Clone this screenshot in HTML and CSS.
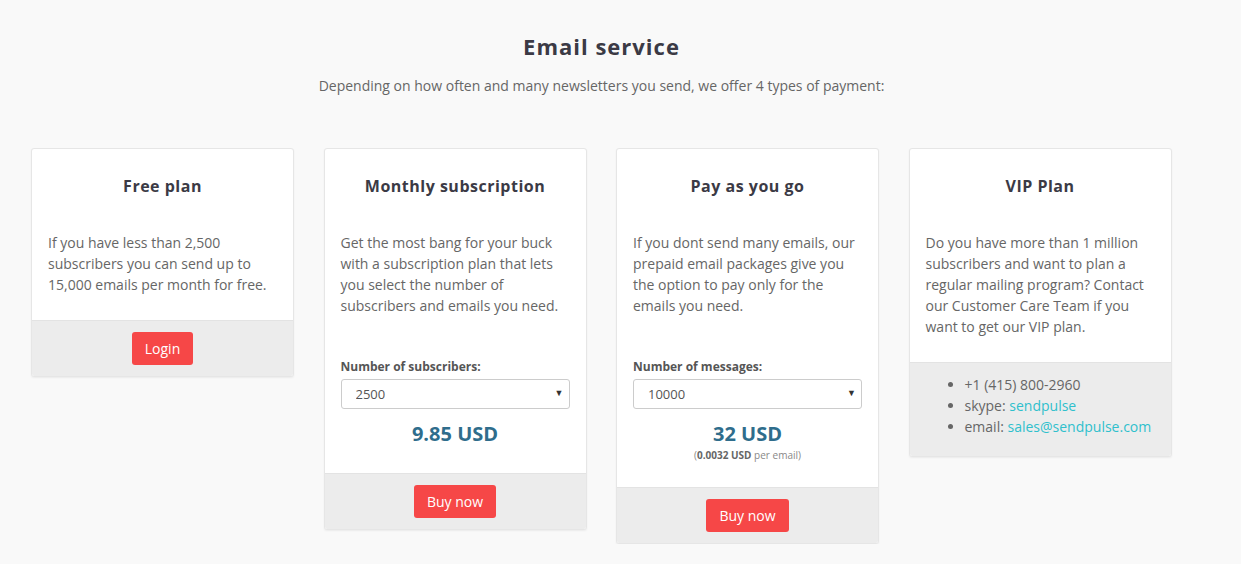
FILE: index.html
```html
<!DOCTYPE html>
<html lang="en">
<head>
<meta charset="utf-8">
<title>Email service</title>
<link rel="stylesheet" href="styles.css">
</head>
<body>
<section class="pricing">
  <header class="intro">
    <h1 class="intro-title">Email service</h1>
    <p class="intro-sub">Depending on how often and many newsletters you send, we offer 4 types of payment:</p>
  </header>
  <div class="plans">
    <article class="plan">
      <div class="plan-body">
        <h2 class="plan-title">Free plan</h2>
        <p class="plan-text">If you have less than 2,500 subscribers you can send up to 15,000 emails per month for free.</p>
      </div>
      <div class="plan-foot">
        <a class="btn" href="#">Login</a>
      </div>
    </article>
    <article class="plan">
      <div class="plan-body">
        <h2 class="plan-title">Monthly subscription</h2>
        <p class="plan-text">Get the most bang for your buck with a subscription plan that lets you select the number of subscribers and emails you need.</p>
        <label class="field-label">Number of subscribers:</label>
        <div class="select-wrap">
          <select class="select"><option>2500</option></select>
        </div>
        <div class="price">9.85 USD</div>
      </div>
      <div class="plan-foot">
        <a class="btn" href="#">Buy now</a>
      </div>
    </article>
    <article class="plan">
      <div class="plan-body">
        <h2 class="plan-title">Pay as you go</h2>
        <p class="plan-text">If you dont send many emails, our prepaid email packages give you the option to pay only for the emails you need.</p>
        <label class="field-label">Number of messages:</label>
        <div class="select-wrap">
          <select class="select"><option>10000</option></select>
        </div>
        <div class="price">32 USD</div>
        <div class="price-note">(<b>0.0032 USD</b> per email)</div>
      </div>
      <div class="plan-foot">
        <a class="btn" href="#">Buy now</a>
      </div>
    </article>
    <article class="plan">
      <div class="plan-body">
        <h2 class="plan-title">VIP Plan</h2>
        <p class="plan-text">Do you have more than 1 million subscribers and want to plan a regular mailing program? Contact our Customer Care Team if you want to get our VIP plan.</p>
      </div>
      <div class="plan-foot plan-foot-list">
        <ul class="contacts">
          <li>+1 (415) 800-2960</li>
          <li>skype: <a class="link" href="#">sendpulse</a></li>
          <li>email: <a class="link" href="#">sales@sendpulse.com</a></li>
        </ul>
      </div>
    </article>
  </div>
</section>
</body>
</html>
```

FILE: styles.css
```css
* { box-sizing: border-box; }
html, body { margin: 0; padding: 0; }
body {
  background: #f9f9f9;
  font-family: "Open Sans", "Liberation Sans", sans-serif;
  color: #666;
  font-size: 14px;
}
.pricing { padding: 30px 0 0 31px; width: 1202px; }
.intro { text-align: center; width: 1141px; }
.intro-title {
  margin: 0;
  font-size: 22px;
  line-height: 32px;
  font-weight: 700;
  color: #3b3a45;
  letter-spacing: 1px;
}
.intro-sub {
  margin: 14px 0 0;
  font-size: 14px;
  line-height: 20px;
  color: #666;
}
.plans {
  margin-top: 52px;
  display: grid;
  grid-template-columns: repeat(4, 263px);
  column-gap: 29.5px;
  align-items: start;
}
.plan {
  background: #fff;
  border: 1px solid #e6e6e6;
  border-radius: 3px;
  box-shadow: 0 1px 2px rgba(0,0,0,0.06);
  overflow: hidden;
}
.plan-body { padding: 26px 16px 25px; }
.plan-title {
  margin: 0;
  text-align: center;
  font-size: 16px;
  line-height: 22px;
  font-weight: 700;
  color: #3b3a45;
  letter-spacing: 0.5px;
}
.plan-text {
  margin: 35px 0 0;
  font-size: 14px;
  line-height: 21px;
  color: #666;
}
.field-label {
  display: block;
  margin-top: 42px;
  font-size: 12px;
  line-height: 18px;
  font-weight: 700;
  color: #555;
}
.select-wrap { position: relative; margin-top: 3px; }
.select-wrap::after {
  content: "\25BC";
  position: absolute;
  right: 6px;
  top: 8px;
  font-size: 9px;
  line-height: 12px;
  color: #333;
  pointer-events: none;
}
.select {
  -webkit-appearance: none;
  appearance: none;
  display: block;
  width: 100%;
  height: 30px;
  border: 1px solid #ccc;
  border-radius: 3px;
  background: #fff;
  padding: 0 14px;
  font-family: "Open Sans", "Liberation Sans", sans-serif;
  font-size: 13px;
  color: #555;
}
.price {
  margin-top: 11px;
  text-align: center;
  font-size: 20px;
  line-height: 28px;
  font-weight: 700;
  color: #2f6d8c;
}
.price-note {
  text-align: center;
  font-size: 10px;
  line-height: 14px;
  color: #888;
}
.price-note b { color: #666; }
.plan-foot {
  background: #ececec;
  border-top: 1px solid #e3e3e3;
  padding: 11px 0 11px;
  text-align: center;
}
.btn {
  display: inline-block;
  background: #f64747;
  color: #fff;
  text-decoration: none;
  font-size: 14px;
  line-height: 33px;
  height: 33px;
  padding: 0 13px;
  border-radius: 3px;
}
.plan-foot-list { text-align: left; padding: 11px 15px 19px; }
.contacts {
  margin: 0;
  padding-left: 40px;
  font-size: 14px;
  line-height: 21px;
  color: #666;
}
.link { color: #2fc0cc; text-decoration: none; }
```
